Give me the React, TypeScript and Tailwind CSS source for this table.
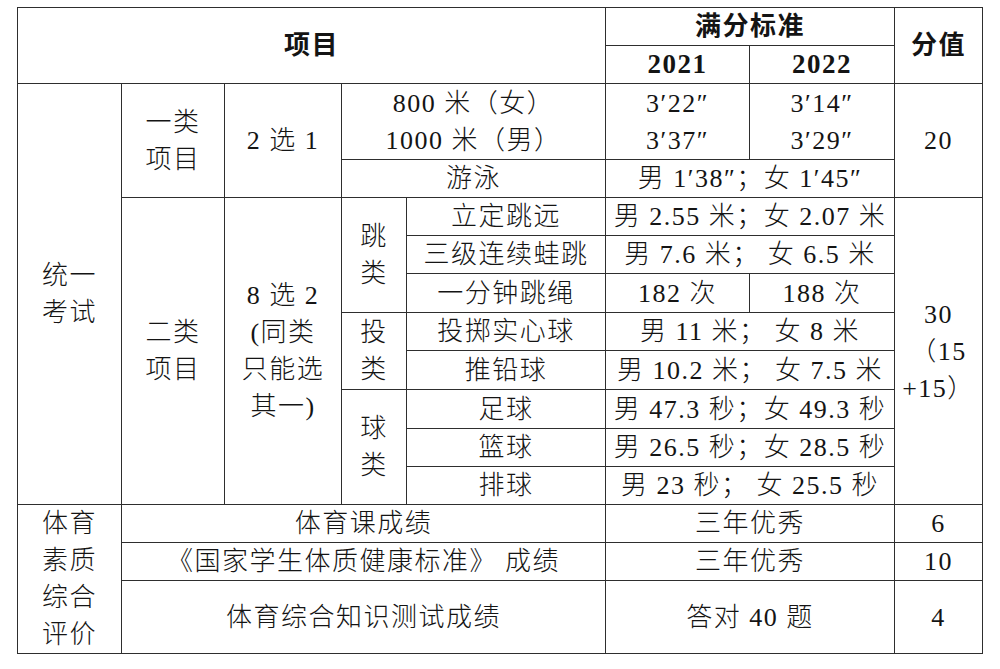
import React from "react";

const C = "border border-[#2e2e2e] text-center align-middle p-0";
const N = C + " font-light";

function L({ lines }: { lines: string[] }) {
  return (
    <div className="flex flex-col items-center">
      {lines.map((l, i) => (
        <div key={i} className="whitespace-pre">
          {l}
        </div>
      ))}
    </div>
  );
}

export default function App() {
  return (
    <div className="w-[1000px] h-[669px] bg-white pt-[7px] pl-[17px] [font-family:Liberation_Serif,Noto_Sans_CJK_SC,serif] text-[26px] leading-[37px] tracking-[1.5px] text-[#141414]">
      <table className="border-collapse table-fixed w-[966px]">
        <colgroup>
          <col className="w-[104px]" />
          <col className="w-[103px]" />
          <col className="w-[117px]" />
          <col className="w-[65px]" />
          <col className="w-[199px]" />
          <col className="w-[144px]" />
          <col className="w-[145px]" />
          <col className="w-[88px]" />
        </colgroup>
        <tbody>
          <tr className="h-[38px]">
            <td className={C + " font-bold"} colSpan={5} rowSpan={2}>
              项目
            </td>
            <td className={C + " font-bold"} colSpan={2}>
              满分标准
            </td>
            <td className={C + " font-bold"} rowSpan={2}>
              分值
            </td>
          </tr>
          <tr className="h-[38px]">
            <td className={C + " font-bold text-[27px]"}>2021</td>
            <td className={C + " font-bold text-[27px]"}>2022</td>
          </tr>
          <tr className="h-[76px]">
            <td className={N} rowSpan={10}>
              <L lines={["统一", "考试"]} />
            </td>
            <td className={N} rowSpan={2}>
              <L lines={["一类", "项目"]} />
            </td>
            <td className={N} rowSpan={2}>
              2 选 1
            </td>
            <td className={N} colSpan={2}>
              <L lines={["800 米（女）", "1000 米（男）"]} />
            </td>
            <td className={N}>
              <L lines={["3′22″", "3′37″"]} />
            </td>
            <td className={N}>
              <L lines={["3′14″", "3′29″"]} />
            </td>
            <td className={N} rowSpan={2}>
              20
            </td>
          </tr>
          <tr className="h-[38px]">
            <td className={N} colSpan={2}>
              游泳
            </td>
            <td className={N} colSpan={2}>
              男 1′38″；女 1′45″
            </td>
          </tr>
          <tr className="h-[38px]">
            <td className={N} rowSpan={8}>
              <L lines={["二类", "项目"]} />
            </td>
            <td className={N} rowSpan={8}>
              <L lines={["8 选 2", "(同类", "只能选", "其一)"]} />
            </td>
            <td className={N} rowSpan={3}>
              <L lines={["跳", "类"]} />
            </td>
            <td className={N}>立定跳远</td>
            <td className={N} colSpan={2}>
              男 2.55 米；女 2.07 米
            </td>
            <td className={N} rowSpan={8}>
              <L lines={["30", "（15", "+15）"]} />
            </td>
          </tr>
          <tr className="h-[38px]">
            <td className={N}>三级连续蛙跳</td>
            <td className={N} colSpan={2}>
              男 7.6 米； 女 6.5 米
            </td>
          </tr>
          <tr className="h-[39px]">
            <td className={N}>一分钟跳绳</td>
            <td className={N}>182 次</td>
            <td className={N}>188 次</td>
          </tr>
          <tr className="h-[37px]">
            <td className={N} rowSpan={2}>
              <L lines={["投", "类"]} />
            </td>
            <td className={N}>投掷实心球</td>
            <td className={N} colSpan={2}>
              男 11 米； 女 8 米
            </td>
          </tr>
          <tr className="h-[39px]">
            <td className={N}>推铅球</td>
            <td className={N} colSpan={2}>
              男 10.2 米； 女 7.5 米
            </td>
          </tr>
          <tr className="h-[39px]">
            <td className={N} rowSpan={3}>
              <L lines={["球", "类"]} />
            </td>
            <td className={N}>足球</td>
            <td className={N} colSpan={2}>
              男 47.3 秒；女 49.3 秒
            </td>
          </tr>
          <tr className="h-[38px]">
            <td className={N}>篮球</td>
            <td className={N} colSpan={2}>
              男 26.5 秒；女 28.5 秒
            </td>
          </tr>
          <tr className="h-[38px]">
            <td className={N}>排球</td>
            <td className={N} colSpan={2}>
              男 23 秒； 女 25.5 秒
            </td>
          </tr>
          <tr className="h-[38px]">
            <td className={N} rowSpan={3}>
              <L lines={["体育", "素质", "综合", "评价"]} />
            </td>
            <td className={N} colSpan={4}>
              体育课成绩
            </td>
            <td className={N} colSpan={2}>
              三年优秀
            </td>
            <td className={N}>6</td>
          </tr>
          <tr className="h-[38px]">
            <td className={N} colSpan={4}>
              《国家学生体质健康标准》 成绩
            </td>
            <td className={N} colSpan={2}>
              三年优秀
            </td>
            <td className={N}>10</td>
          </tr>
          <tr className="h-[73px]">
            <td className={N} colSpan={4}>
              体育综合知识测试成绩
            </td>
            <td className={N} colSpan={2}>
              答对 40 题
            </td>
            <td className={N}>4</td>
          </tr>
        </tbody>
      </table>
    </div>
  );
}
